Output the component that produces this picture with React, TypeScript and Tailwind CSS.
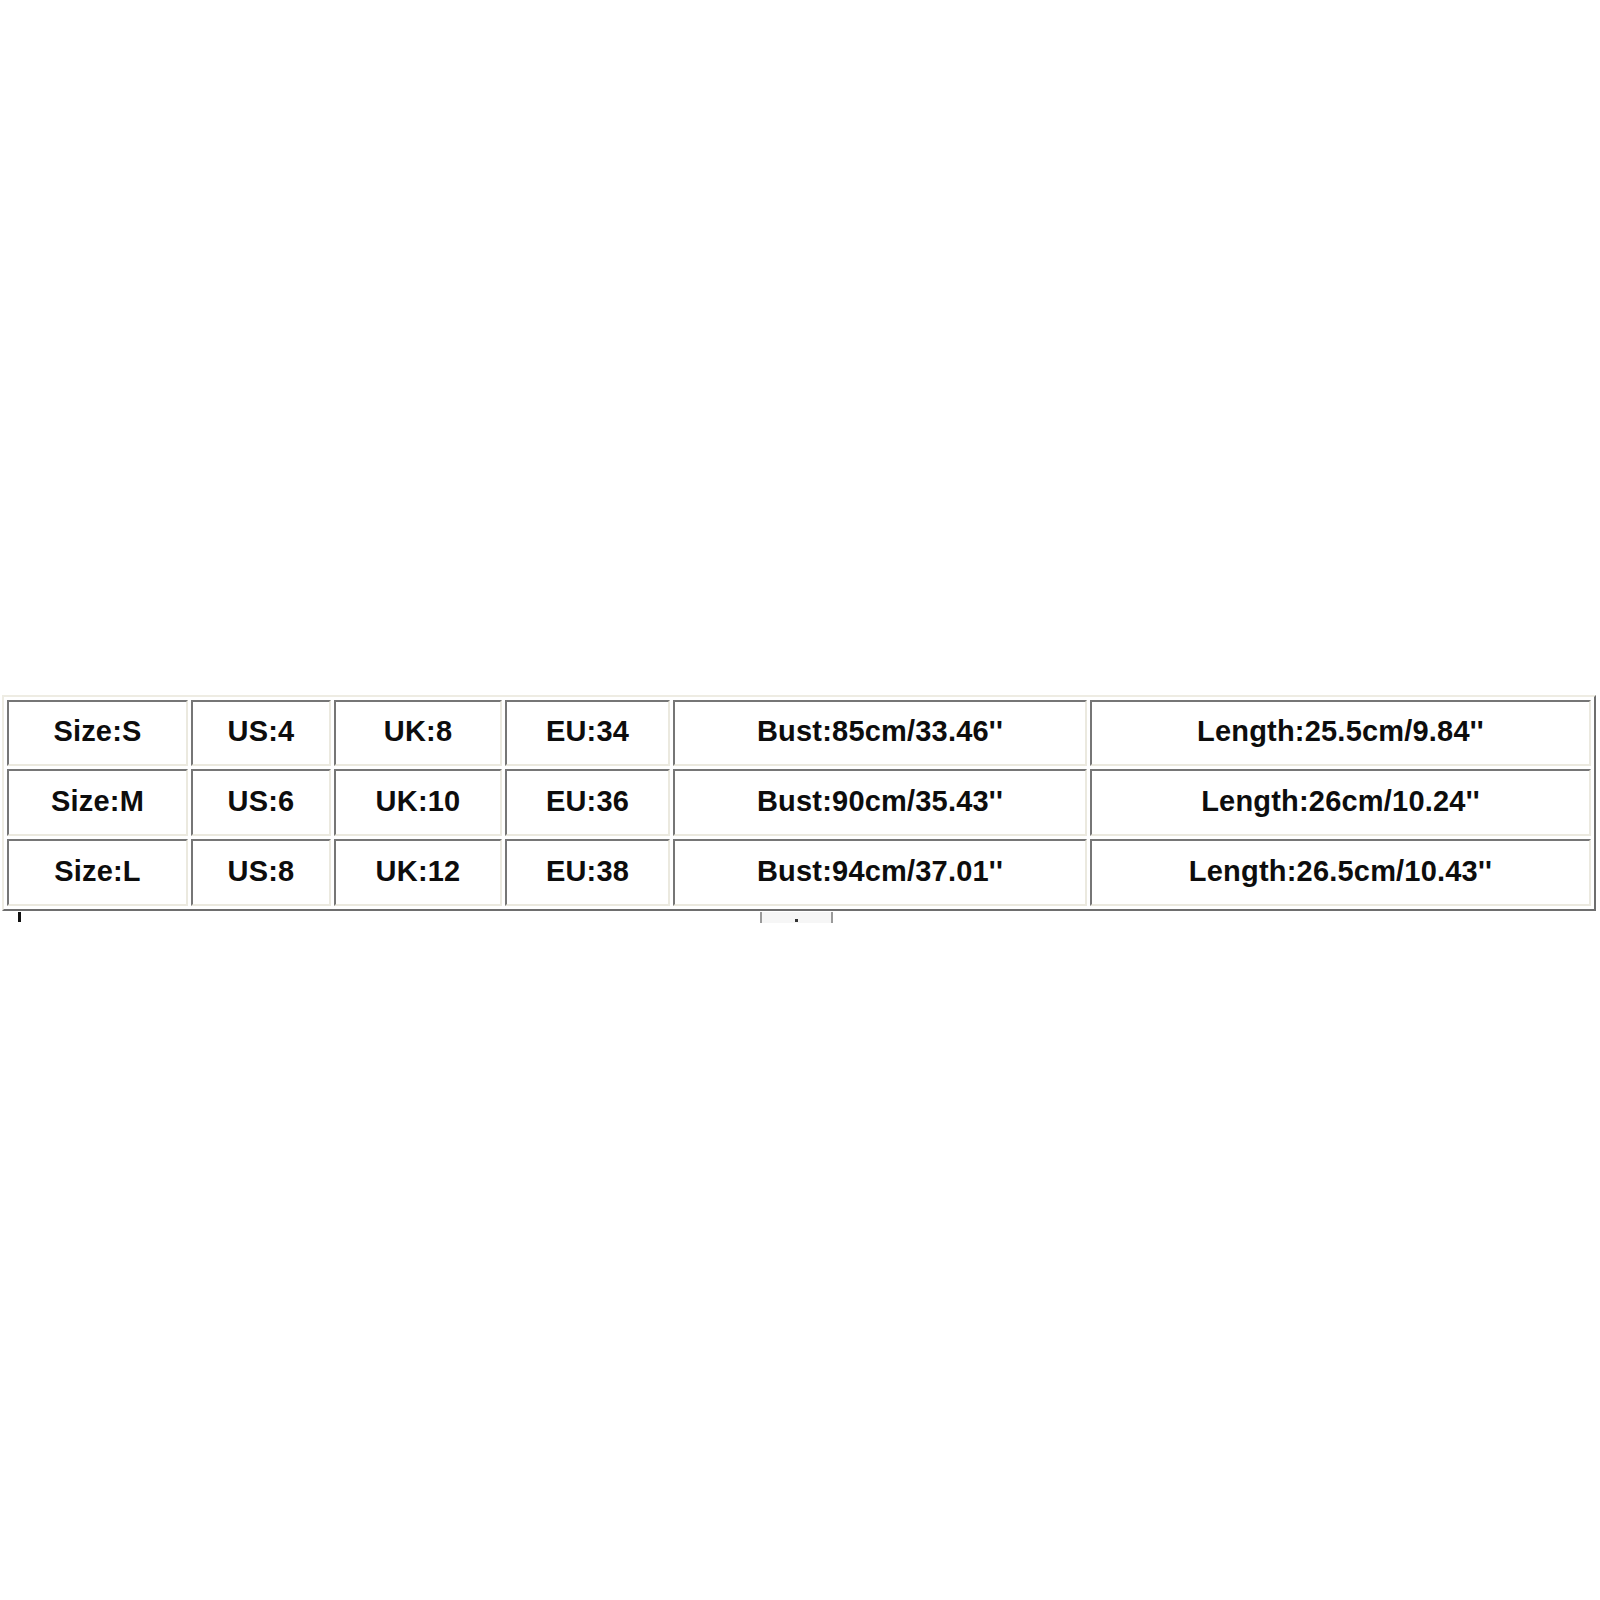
import React from "react";

type Row = string[];

const rows: Row[] = [
	["Size:S", "US:4", "UK:8", "EU:34", "Bust:85cm/33.46''", "Length:25.5cm/9.84''"],
	["Size:M", "US:6", "UK:10", "EU:36", "Bust:90cm/35.43''", "Length:26cm/10.24''"],
	["Size:L", "US:8", "UK:12", "EU:38", "Bust:94cm/37.01''", "Length:26.5cm/10.43''"],
];

const rowHeights = ["h-[66px]", "h-[67px]", "h-[67px]"];

const SizeCell = ({ text }: { text: string }) => (
	<td className="p-0 text-center align-middle border-2 border-t-[#767676] border-l-[#767676] border-b-[#ebe9df] border-r-[#ebe9df] bg-white">
		<span className="relative top-[-1px] text-[29px] font-bold text-[#0d0d0d] tracking-[0.2px]">
			{text}
		</span>
	</td>
);

export default function App() {
	return (
		<div
			className="w-[1600px] h-[1600px] bg-white pt-[695px] pl-[2px]"
			style={{ fontFamily: '"Liberation Sans", Arial, sans-serif' }}
		>
			{/* size chart */}
			<table className="table-fixed w-[1594px] border-separate border-spacing-[3px] border-2 border-t-[#eeece3] border-l-[#eeece3] border-b-[#6e6e6e] border-r-[#6e6e6e]">
				<colgroup>
					<col className="w-[181px]" />
					<col className="w-[140px]" />
					<col className="w-[168px]" />
					<col className="w-[165px]" />
					<col className="w-[414px]" />
					<col className="w-[501px]" />
				</colgroup>
				<tbody>
					{rows.map((row, i) => (
						<tr key={i} className={rowHeights[i]}>
							{row.map((cell, j) => (
								<SizeCell key={j} text={cell} />
							))}
						</tr>
					))}
				</tbody>
			</table>

			{/* leftovers under the table */}
			<div className="flex items-start">
				<div className="ml-[16px] mt-[1px] w-[3px] h-[10px] bg-[#111]" />
				<div className="ml-[739px] mt-[1px] w-[73px] h-[11px] border-l-2 border-r-2 border-[#9a9a9a] bg-[#f6f6f6] flex items-end justify-center">
					<div className="w-[3px] h-[3px] bg-[#333] mb-[1px]" />
				</div>
			</div>
		</div>
	);
}
